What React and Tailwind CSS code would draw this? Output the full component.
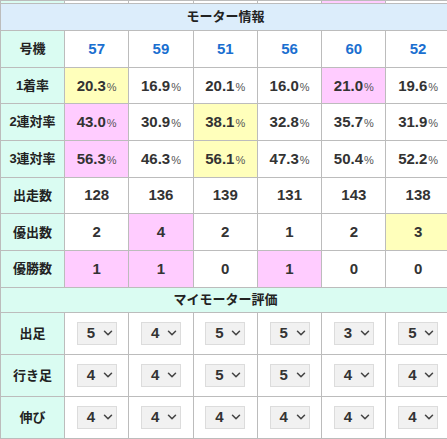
import { ChevronDown } from 'lucide-react'

const FONT = { fontFamily: '"Liberation Sans", "Noto Sans CJK JP", sans-serif' }

const motors = ['57', '59', '51', '56', '60', '52']

const rateRows = [
  { label: '1着率', values: [['20.3', 'y'], ['16.9'], ['20.1'], ['16.0'], ['21.0', 'p'], ['19.6']] },
  { label: '2連対率', values: [['43.0', 'p'], ['30.9'], ['38.1', 'y'], ['32.8'], ['35.7'], ['31.9']] },
  { label: '3連対率', values: [['56.3', 'p'], ['46.3'], ['56.1', 'y'], ['47.3'], ['50.4'], ['52.2']] },
]

const countRows = [
  { label: '出走数', values: [['128'], ['136'], ['139'], ['131'], ['143'], ['138']] },
  { label: '優出数', values: [['2'], ['4', 'p'], ['2'], ['1'], ['2'], ['3', 'y']] },
  { label: '優勝数', values: [['1', 'p'], ['1', 'p'], ['0'], ['1', 'p'], ['0'], ['0']] },
]

const ratings = [
  { label: '出足', values: [5, 4, 5, 5, 3, 5] },
  { label: '行き足', values: [4, 4, 5, 5, 4, 4] },
  { label: '伸び', values: [4, 4, 4, 4, 4, 4] },
]

const bg = (c) => (c === 'y' ? 'bg-[#ffffbb]' : c === 'p' ? 'bg-[#ffccff]' : 'bg-white')

const Label = ({ children }) => (
  <th className="border border-[#bcbcbc] bg-[#dafcf2] text-[13px] font-bold text-[#222]">{children}</th>
)

const Select = ({ value }) => (
  <div className="mx-auto flex h-[23px] w-[40px] items-center justify-between border border-[#dcdcdc] bg-[#f1f1f1] pl-[9px] pr-[1px]">
    <span className="text-[15px] font-bold text-[#333]">{value}</span>
    <ChevronDown size={14} strokeWidth={2.6} className="text-[#444]" />
  </div>
)

export default function App() {
  return (
    <div className="h-[439px] w-[447px] overflow-hidden bg-white" style={FONT}>
      <table className="w-[450px] table-fixed border-collapse text-center text-[#333]">
        <colgroup>
          <col className="w-[64px]" />
          {motors.map((m) => (
            <col key={m} className="w-[64.3px]" />
          ))}
        </colgroup>
        <tbody>
          <tr className="h-[3px]">
            <td className="border border-[#bcbcbc] bg-[#dafcf2] p-0" />
            {motors.map((m, i) => (
              <td key={m} className={`border border-[#bcbcbc] p-0 ${i === 4 ? 'bg-[#ffccff]' : 'bg-white'}`} />
            ))}
          </tr>
          <tr className="h-[27px]">
            <th colSpan={7} className="border border-[#bcbcbc] bg-[#dcedfb] text-[13px] font-bold text-[#222]">
              モーター情報
            </th>
          </tr>
          <tr className="h-[36.7px]">
            <Label>号機</Label>
            {motors.map((m) => (
              <td key={m} className="border border-[#bcbcbc] bg-white text-[15px] font-bold text-[#1a6fd0]">
                {m}
              </td>
            ))}
          </tr>
          {rateRows.map((row) => (
            <tr key={row.label} className="h-[36.7px]">
              <Label>{row.label}</Label>
              {row.values.map(([v, c], i) => (
                <td key={i} className={`border border-[#bcbcbc] ${bg(c)}`}>
                  <span className="text-[15px] font-bold">{v}</span>
                  <span className="ml-[1px] text-[11px] text-[#555]">%</span>
                </td>
              ))}
            </tr>
          ))}
          {countRows.map((row) => (
            <tr key={row.label} className="h-[36.7px]">
              <Label>{row.label}</Label>
              {row.values.map(([v, c], i) => (
                <td key={i} className={`border border-[#bcbcbc] text-[15px] font-bold ${bg(c)}`}>
                  {v}
                </td>
              ))}
            </tr>
          ))}
          <tr className="h-[25px]">
            <th colSpan={7} className="border border-[#bcbcbc] bg-[#dafcf2] text-[13px] font-bold text-[#222]">
              マイモーター評価
            </th>
          </tr>
          {ratings.map((row) => (
            <tr key={row.label} className="h-[42px]">
              <Label>{row.label}</Label>
              {row.values.map((v, i) => (
                <td key={i} className="border border-[#bcbcbc] bg-white">
                  <Select value={v} />
                </td>
              ))}
            </tr>
          ))}
          <tr className="h-[10px]">
            <td className="border border-[#bcbcbc] bg-[#dafcf2] p-0" />
            {motors.map((m) => (
              <td key={m} className="border border-[#bcbcbc] bg-white p-0" />
            ))}
          </tr>
        </tbody>
      </table>
    </div>
  )
}
